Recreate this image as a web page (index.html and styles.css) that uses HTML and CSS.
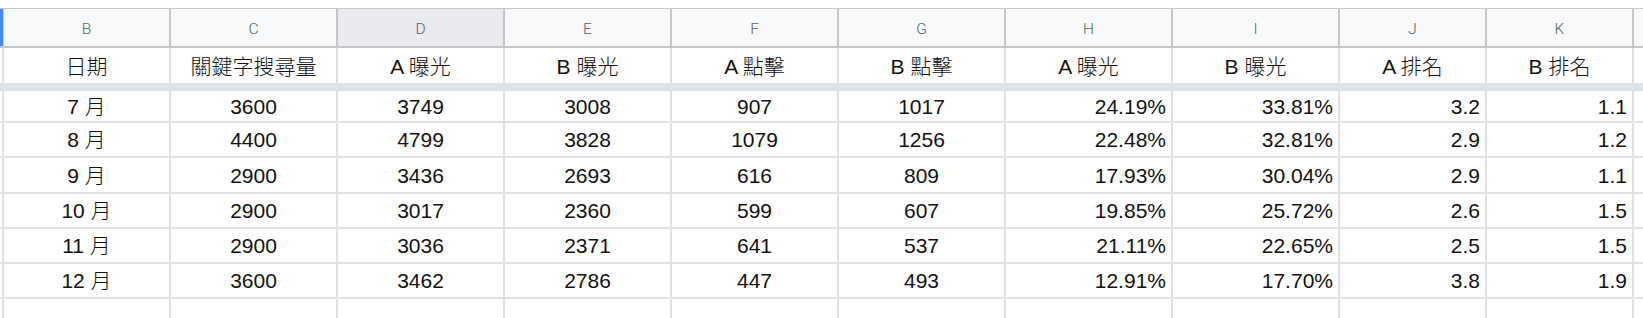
FILE: index.html
```html
<!DOCTYPE html>
<html lang="zh-Hant">
<head>
<meta charset="utf-8">
<title>Sheet</title>
<link rel="stylesheet" href="styles.css">
</head>
<body>
<div class="sheet">
  <div class="row colhead">
    <div class="c edge"></div>
    <div class="c">B</div>
    <div class="c">C</div>
    <div class="c sel">D</div>
    <div class="c">E</div>
    <div class="c">F</div>
    <div class="c">G</div>
    <div class="c">H</div>
    <div class="c">I</div>
    <div class="c">J</div>
    <div class="c">K</div>
    <div class="c last"></div>
  </div>
  <div class="row titles">
    <div class="c edge"></div>
    <div class="c">日期</div>
    <div class="c">關鍵字搜尋量</div>
    <div class="c">A 曝光</div>
    <div class="c">B 曝光</div>
    <div class="c">A 點擊</div>
    <div class="c">B 點擊</div>
    <div class="c">A 曝光</div>
    <div class="c">B 曝光</div>
    <div class="c">A 排名</div>
    <div class="c">B 排名</div>
    <div class="c last"></div>
  </div>
  <div class="band"></div>
  <div class="row data h32">
    <div class="c edge"></div>
    <div class="c">7 月</div><div class="c">3600</div><div class="c">3749</div><div class="c">3008</div><div class="c">907</div><div class="c">1017</div>
    <div class="c r">24.19%</div><div class="c r">33.81%</div><div class="c r">3.2</div><div class="c r">1.1</div>
    <div class="c last"></div>
  </div>
  <div class="row data h35">
    <div class="c edge"></div>
    <div class="c">8 月</div><div class="c">4400</div><div class="c">4799</div><div class="c">3828</div><div class="c">1079</div><div class="c">1256</div>
    <div class="c r">22.48%</div><div class="c r">32.81%</div><div class="c r">2.9</div><div class="c r">1.2</div>
    <div class="c last"></div>
  </div>
  <div class="row data h36">
    <div class="c edge"></div>
    <div class="c">9 月</div><div class="c">2900</div><div class="c">3436</div><div class="c">2693</div><div class="c">616</div><div class="c">809</div>
    <div class="c r">17.93%</div><div class="c r">30.04%</div><div class="c r">2.9</div><div class="c r">1.1</div>
    <div class="c last"></div>
  </div>
  <div class="row data h35">
    <div class="c edge"></div>
    <div class="c">10 月</div><div class="c">2900</div><div class="c">3017</div><div class="c">2360</div><div class="c">599</div><div class="c">607</div>
    <div class="c r">19.85%</div><div class="c r">25.72%</div><div class="c r">2.6</div><div class="c r">1.5</div>
    <div class="c last"></div>
  </div>
  <div class="row data h35">
    <div class="c edge"></div>
    <div class="c">11 月</div><div class="c">2900</div><div class="c">3036</div><div class="c">2371</div><div class="c">641</div><div class="c">537</div>
    <div class="c r">21.11%</div><div class="c r">22.65%</div><div class="c r">2.5</div><div class="c r">1.5</div>
    <div class="c last"></div>
  </div>
  <div class="row data h35">
    <div class="c edge"></div>
    <div class="c">12 月</div><div class="c">3600</div><div class="c">3462</div><div class="c">2786</div><div class="c">447</div><div class="c">493</div>
    <div class="c r">12.91%</div><div class="c r">17.70%</div><div class="c r">3.8</div><div class="c r">1.9</div>
    <div class="c last"></div>
  </div>
  <div class="row data tail">
    <div class="c edge"></div>
    <div class="c"></div><div class="c"></div><div class="c"></div><div class="c"></div><div class="c"></div><div class="c"></div>
    <div class="c"></div><div class="c"></div><div class="c"></div><div class="c"></div>
    <div class="c last"></div>
  </div>
</div>
</body>
</html>
```

FILE: styles.css
```css
html, body {
  margin: 0;
  padding: 0;
  background: #ffffff;
}

.sheet {
  padding-top: 8px;
  width: 1643px;
  height: 318px;
  box-sizing: border-box;
  overflow: hidden;
}

.row {
  display: grid;
  grid-template-columns: 4px repeat(8, 167px) 147px 147px 1fr;
  box-sizing: border-box;
}

.c {
  box-sizing: border-box;
  display: flex;
  align-items: center;
  justify-content: center;
  border-right: 2px solid #e1e1e1;
  white-space: nowrap;
  overflow: hidden;
}

.c.last {
  border-right: none;
}

.c.r {
  justify-content: flex-end;
  padding-right: 5px;
}

/* column letter header */
.colhead {
  height: 40px;
  border-top: 1px solid #c4c7c5;
  border-bottom: 2px solid #c4c7c5;
  background: #f8f9fa;
}

.colhead .c {
  border-right-color: #c4c7c5;
  font-family: Roboto, "Liberation Sans", Arial, sans-serif;
  font-size: 15.5px;
  font-weight: 300;
  line-height: 16px;
  color: #5a5e63;
  padding-top: 3px;
}

.colhead .c.edge {
  background: #4a86f0;
  border-right: 1px solid #c4c7c5;
}

.colhead .c.sel {
  background: #e9ebee;
}

/* title row and data */
.titles .c,
.data .c {
  font-family: "Liberation Sans", Arial, "Noto Sans CJK TC", sans-serif;
  font-size: 21px;
  font-weight: 300;
  line-height: 21px;
  color: #111111;
}

.titles {
  height: 35px;
}

.titles .c {
  padding-top: 1px;
}

.band {
  height: 8px;
  background: #dde1e8;
}

.data .c {
  border-bottom: 2px solid #e1e1e1;
}

.h32 { height: 32px; }
.h35 { height: 35px; }
.h36 { height: 36px; }
.tail { height: 40px; }

.data.h32 .c {
  padding-top: 1px;
}
```
